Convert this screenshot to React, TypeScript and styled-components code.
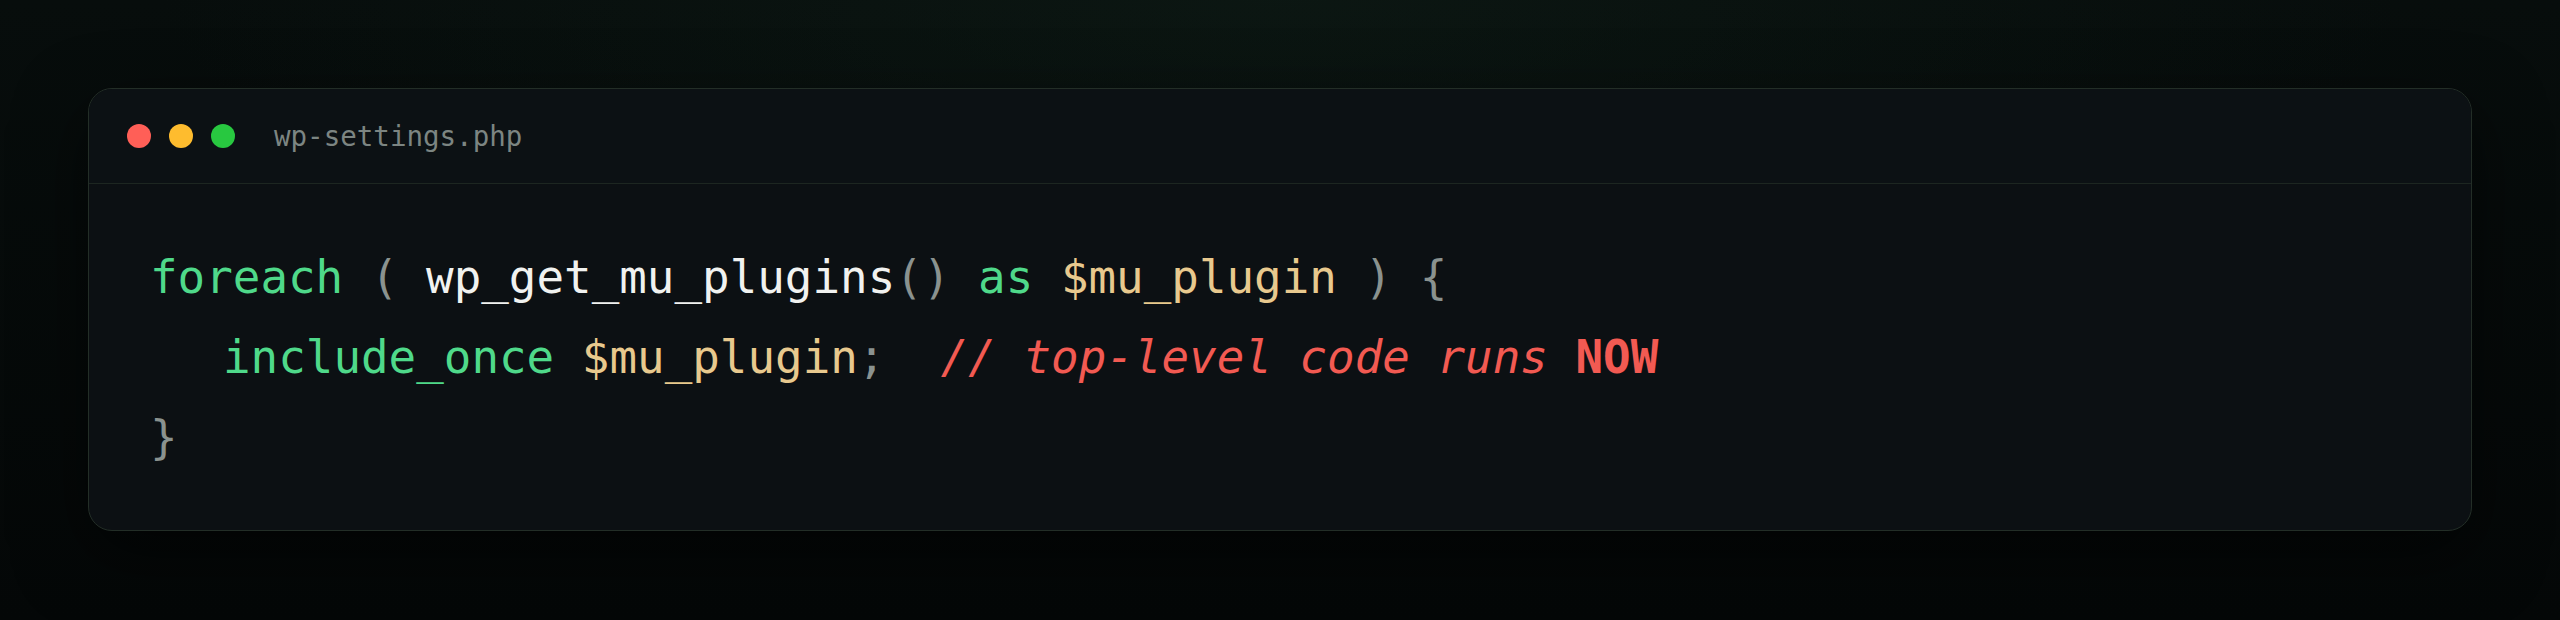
import React from "react";
import styled, { createGlobalStyle } from "styled-components";

const Global = createGlobalStyle`
  html, body { margin: 0; padding: 0; }
  body {
    background: #050808;
    font-family: "DejaVu Sans Mono", "Liberation Mono", monospace;
  }
`;

const Page = styled.div`
  box-sizing: border-box;
  width: 2560px;
  height: 620px;
  padding: 88px;
  background:
    radial-gradient(ellipse 1600px 420px at 50% 0%, rgba(20, 40, 30, 0.35), transparent 70%),
    linear-gradient(180deg, #070d0c 0%, #040707 100%);
`;

const Window = styled.div`
  border: 1px solid #232e27;
  border-radius: 24px;
  background: #0c1013;
  box-shadow: 0 24px 70px rgba(0, 0, 0, 0.55);
  overflow: hidden;
`;

const TitleBar = styled.div`
  display: flex;
  align-items: center;
  height: 94px;
  padding-left: 38px;
  border-bottom: 1px solid #1d2621;
  background: #0c1114;
`;

const Dots = styled.div`
  display: flex;
  gap: 18px;
  margin-right: 39px;
`;

const Dot = styled.span<{ $c: string }>`
  width: 24px;
  height: 24px;
  border-radius: 50%;
  background: ${(p) => p.$c};
`;

const FileName = styled.span`
  font-family: "DejaVu Sans Mono", monospace;
  font-size: 27.5px;
  color: #7c8582;
`;

const Code = styled.pre`
  margin: 0;
  padding: 53px 61px;
  font-family: "DejaVu Sans Mono", monospace;
  font-size: 45.85px;
  line-height: 80px;
  color: #eef0ee;
`;

const Line = styled.div<{ $indent?: boolean }>`
  height: 80px;
  padding-left: ${(p) => (p.$indent ? "73px" : "0")};
  white-space: pre;
`;

const Kw = styled.span`
  color: #4fd98a;
`;
const Fn = styled.span`
  color: #f1f2f0;
`;
const Punc = styled.span`
  color: #8a928f;
`;
const Var = styled.span`
  color: #e8c98e;
`;
const Comment = styled.span`
  color: #f25a52;
  font-style: italic;
`;
const Loud = styled.span`
  color: #f25a52;
  font-weight: bold;
  font-style: normal;
`;

export default function App() {
  return (
    <>
      <Global />
      <Page>
        <Window>
          <TitleBar>
            <Dots>
              <Dot $c="#ff5f57" />
              <Dot $c="#febc2e" />
              <Dot $c="#28c840" />
            </Dots>
            <FileName>wp-settings.php</FileName>
          </TitleBar>
          <Code>
            <Line>
              <Kw>foreach</Kw> <Punc>(</Punc> <Fn>wp_get_mu_plugins</Fn>
              <Punc>()</Punc> <Kw>as</Kw> <Var>$mu_plugin</Var> <Punc>)</Punc>{" "}
              <Punc>{"{"}</Punc>
            </Line>
            <Line $indent>
              <Kw>include_once</Kw> <Var>$mu_plugin</Var>
              <Punc>;</Punc>
              {"  "}
              <Comment>// top-level code runs </Comment>
              <Loud>NOW</Loud>
            </Line>
            <Line>
              <Punc>{"}"}</Punc>
            </Line>
          </Code>
        </Window>
      </Page>
    </>
  );
}
